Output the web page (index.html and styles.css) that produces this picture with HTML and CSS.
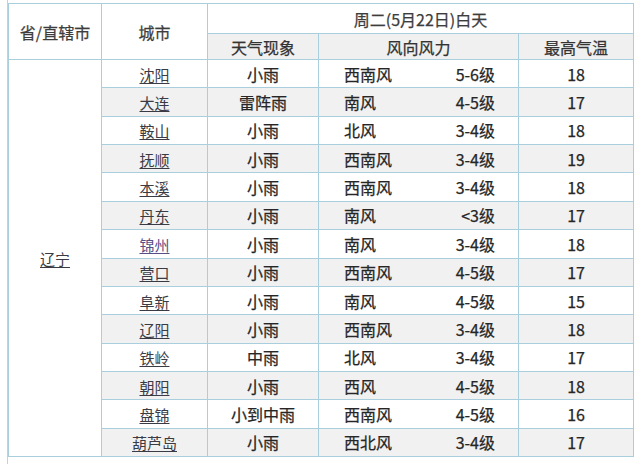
FILE: index.html
```html
<!DOCTYPE html>
<html lang="zh">
<head>
<meta charset="utf-8">
<link rel="stylesheet" href="styles.css">
</head>
<body>
<div class="frame">
<table class="weather">
  <colgroup>
    <col class="c1"><col class="c2"><col class="c3"><col class="c4"><col class="c5">
  </colgroup>
  <thead>
    <tr class="h1">
      <th rowspan="2" class="plain">省/直辖市</th>
      <th rowspan="2" class="plain">城市</th>
      <th colspan="3" class="plain">周二(5月22日)白天</th>
    </tr>
    <tr class="h2">
      <th>天气现象</th>
      <th>风向风力</th>
      <th>最高气温</th>
    </tr>
  </thead>
  <tbody>
    <tr><td rowspan="14" class="prov"><a>辽宁</a></td><td><a>沈阳</a></td><td>小雨</td><td class="wind"><span>西南风</span><span>5-6级</span></td><td>18</td></tr>
    <tr class="alt"><td><a>大连</a></td><td>雷阵雨</td><td class="wind"><span>南风</span><span>4-5级</span></td><td>17</td></tr>
    <tr><td><a>鞍山</a></td><td>小雨</td><td class="wind"><span>北风</span><span>3-4级</span></td><td>18</td></tr>
    <tr class="alt"><td><a>抚顺</a></td><td>小雨</td><td class="wind"><span>西南风</span><span>3-4级</span></td><td>19</td></tr>
    <tr><td><a>本溪</a></td><td>小雨</td><td class="wind"><span>西南风</span><span>3-4级</span></td><td>18</td></tr>
    <tr class="alt"><td><a>丹东</a></td><td>小雨</td><td class="wind"><span>南风</span><span>&lt;3级</span></td><td>17</td></tr>
    <tr><td><a class="visited">锦州</a></td><td>小雨</td><td class="wind"><span>南风</span><span>3-4级</span></td><td>18</td></tr>
    <tr class="alt"><td><a>营口</a></td><td>小雨</td><td class="wind"><span>西南风</span><span>4-5级</span></td><td>17</td></tr>
    <tr><td><a>阜新</a></td><td>小雨</td><td class="wind"><span>南风</span><span>4-5级</span></td><td>15</td></tr>
    <tr class="alt"><td><a>辽阳</a></td><td>小雨</td><td class="wind"><span>西南风</span><span>3-4级</span></td><td>18</td></tr>
    <tr><td><a>铁岭</a></td><td>中雨</td><td class="wind"><span>北风</span><span>3-4级</span></td><td>17</td></tr>
    <tr class="alt"><td><a>朝阳</a></td><td>小雨</td><td class="wind"><span>西风</span><span>4-5级</span></td><td>18</td></tr>
    <tr><td><a>盘锦</a></td><td>小到中雨</td><td class="wind"><span>西南风</span><span>4-5级</span></td><td>16</td></tr>
    <tr class="alt"><td><a>葫芦岛</a></td><td>小雨</td><td class="wind"><span>西北风</span><span>3-4级</span></td><td>17</td></tr>
  </tbody>
</table>
</div>
</body>
</html>
```

FILE: styles.css
```css
html, body {
  margin: 0;
  padding: 0;
  background: #ffffff;
}
body {
  font-family: "Noto Sans CJK SC", "Noto Sans", sans-serif;
  color: #262626;
}
.frame {
  margin-left: 7px;
  padding-top: 3px;
  padding-bottom: 7px;
  border-left: 1px solid #b8d6e2;
  width: 626px;
}
.weather {
  border-collapse: collapse;
  table-layout: fixed;
  width: 625px;
  font-size: 16px;
  line-height: 1;
  -webkit-text-stroke: 0.25px currentColor;
}
.c1 { width: 93px; }
.c2 { width: 106px; }
.c3 { width: 111px; }
.c4 { width: 200px; }
.c5 { width: 115px; }
.weather th,
.weather td {
  border: 1px solid #a9cedd;
  padding: 0;
  text-align: center;
  vertical-align: middle;
  font-weight: normal;
}
.weather th {
  color: #333333;
  background: #f0f0f0;
}
.weather th.plain {
  background: #ffffff;
  color: #3d3d3d;
}
.h1 th { height: 29px; }
.h2 th { height: 25px; }
.weather tbody td {
  height: 27.36px;
  background: #ffffff;
}
.weather tbody tr.alt td {
  background: #f1f1f1;
}
.weather tbody td.prov {
  background: #ffffff;
}
.weather a {
  font-size: 15px;
  color: #3b3b45;
  text-decoration: underline;
  text-underline-offset: 2px;
  text-decoration-thickness: 1px;
  -webkit-text-stroke: 0;
}
.weather a.visited {
  color: #5a4e86;
}
.weather td.wind {
  text-align: left;
}
.wind span:first-child {
  display: inline-block;
  width: 107px;
  padding-left: 25px;
}
.wind span:last-child {
  display: inline-block;
  width: 44px;
  text-align: right;
}
```
